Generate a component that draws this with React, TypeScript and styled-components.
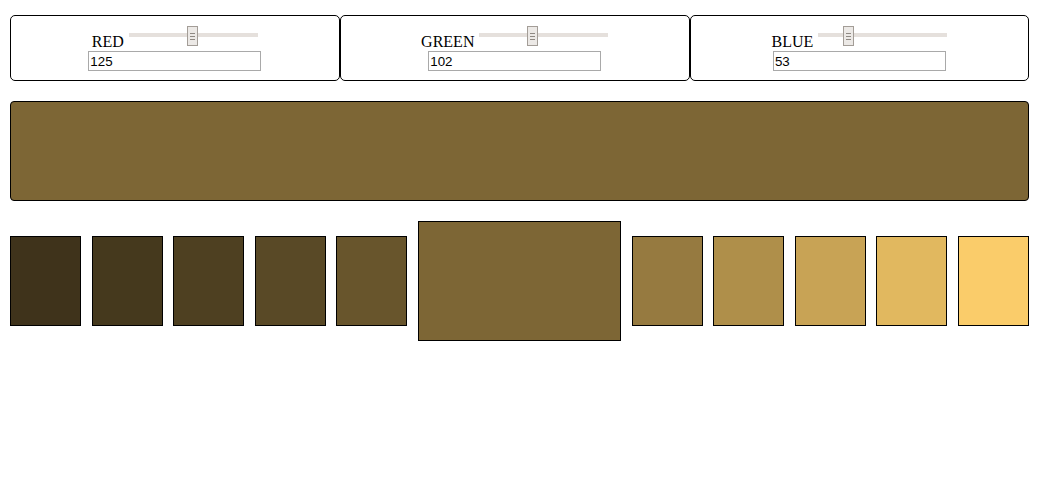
import React, { useState } from 'react';
import styled, { createGlobalStyle } from 'styled-components';

const GlobalStyle = createGlobalStyle`
  body {
    margin: 0;
    background: #ffffff;
    font-family: "Liberation Serif", "Times New Roman", serif;
    font-size: 16px;
    color: #000;
  }
`;

const Page = styled.div`
  padding: 15px 11px 0 10px;
`;

const Controls = styled.div`
  display: flex;
`;

// each panel sizes itself from its content, then the row shrinks them
const Panel = styled.div`
  flex: 1 1 auto;
  display: flex;
  flex-wrap: wrap;
  justify-content: center;
  align-items: flex-end;
  padding: 9px 0;
  border: 1px solid #000;
  border-radius: 5px;
`;

const Label = styled.span`
  line-height: normal;
`;

const Slider = styled.div`
  position: relative;
  width: 131px;
  height: 26px;
  margin-left: 3px;
  cursor: pointer;
`;

const Track = styled.div`
  position: absolute;
  left: 2px;
  right: 0;
  top: 8px;
  height: 4px;
  background: #e5e0dc;
`;

const Thumb = styled.div`
  position: absolute;
  top: 1px;
  width: 11px;
  height: 20px;
  box-sizing: border-box;
  border: 1px solid #a39d97;
  background: #ece9e6;
  display: flex;
  flex-direction: column;
  justify-content: center;
  align-items: center;
  gap: 2px;

  span {
    width: 5px;
    height: 1px;
    background: #8f8983;
  }
`;

const NumberField = styled.input`
  width: 173px;
  height: 20px;
  box-sizing: border-box;
  padding: 0 1px;
  border: 1px solid #a9a9a9;
  font-family: "Liberation Sans", Arial, sans-serif;
  font-size: 13.33px;
  color: #000;
  outline: none;
`;

const MainSwatch = styled.div<{ $color: string }>`
  margin-top: 20px;
  height: 100px;
  box-sizing: border-box;
  border: 1px solid #000;
  border-radius: 4px;
  background: ${p => p.$color};
`;

const Shades = styled.div`
  margin-top: 20px;
  display: flex;
  justify-content: space-between;
  align-items: center;
`;

const Swatch = styled.div<{ $color: string; $big?: boolean }>`
  width: ${p => (p.$big ? '20%' : '7%')};
  height: ${p => (p.$big ? '120px' : '90px')};
  box-sizing: border-box;
  border: 1px solid #000;
  background: ${p => p.$color};
`;

type Channel = 'r' | 'g' | 'b';

const rgb = (r: number, g: number, b: number) => {
  const c = (v: number) => Math.max(0, Math.min(255, Math.round(v)));
  return `rgb(${c(r)}, ${c(g)}, ${c(b)})`;
};

const ChannelControl: React.FC<{
  label: string;
  value: number;
  onChange: (v: number) => void;
}> = ({ label, value, onChange }) => {
  const left = 2 + (value / 255) * (129 - 11);
  return (
    <Panel>
      <Label>{label}</Label>
      <Slider>
        <Track />
        <Thumb style={{ left }}>
          <span />
          <span />
          <span />
        </Thumb>
      </Slider>
      <NumberField
        type="text"
        value={value}
        onChange={e => onChange(Number(e.target.value) || 0)}
      />
    </Panel>
  );
};

const factors = [2, 1.8, 1.6, 1.4, 1.2];

const App: React.FC = () => {
  const [color, setColor] = useState({ r: 125, g: 102, b: 53 });
  const set = (k: Channel) => (v: number) => setColor(c => ({ ...c, [k]: v }));
  const { r, g, b } = color;
  const base = rgb(r, g, b);

  return (
    <Page>
      <GlobalStyle />
      <Controls>
        <ChannelControl label="RED" value={r} onChange={set('r')} />
        <ChannelControl label="GREEN" value={g} onChange={set('g')} />
        <ChannelControl label="BLUE" value={b} onChange={set('b')} />
      </Controls>
      <MainSwatch $color={base} />
      <Shades>
        {factors.map(f => (
          <Swatch key={'d' + f} $color={rgb(r / f, g / f, b / f)} />
        ))}
        <Swatch $big $color={base} />
        {[...factors].reverse().map(f => (
          <Swatch key={'l' + f} $color={rgb(r * f, g * f, b * f)} />
        ))}
      </Shades>
    </Page>
  );
};

export default App;
